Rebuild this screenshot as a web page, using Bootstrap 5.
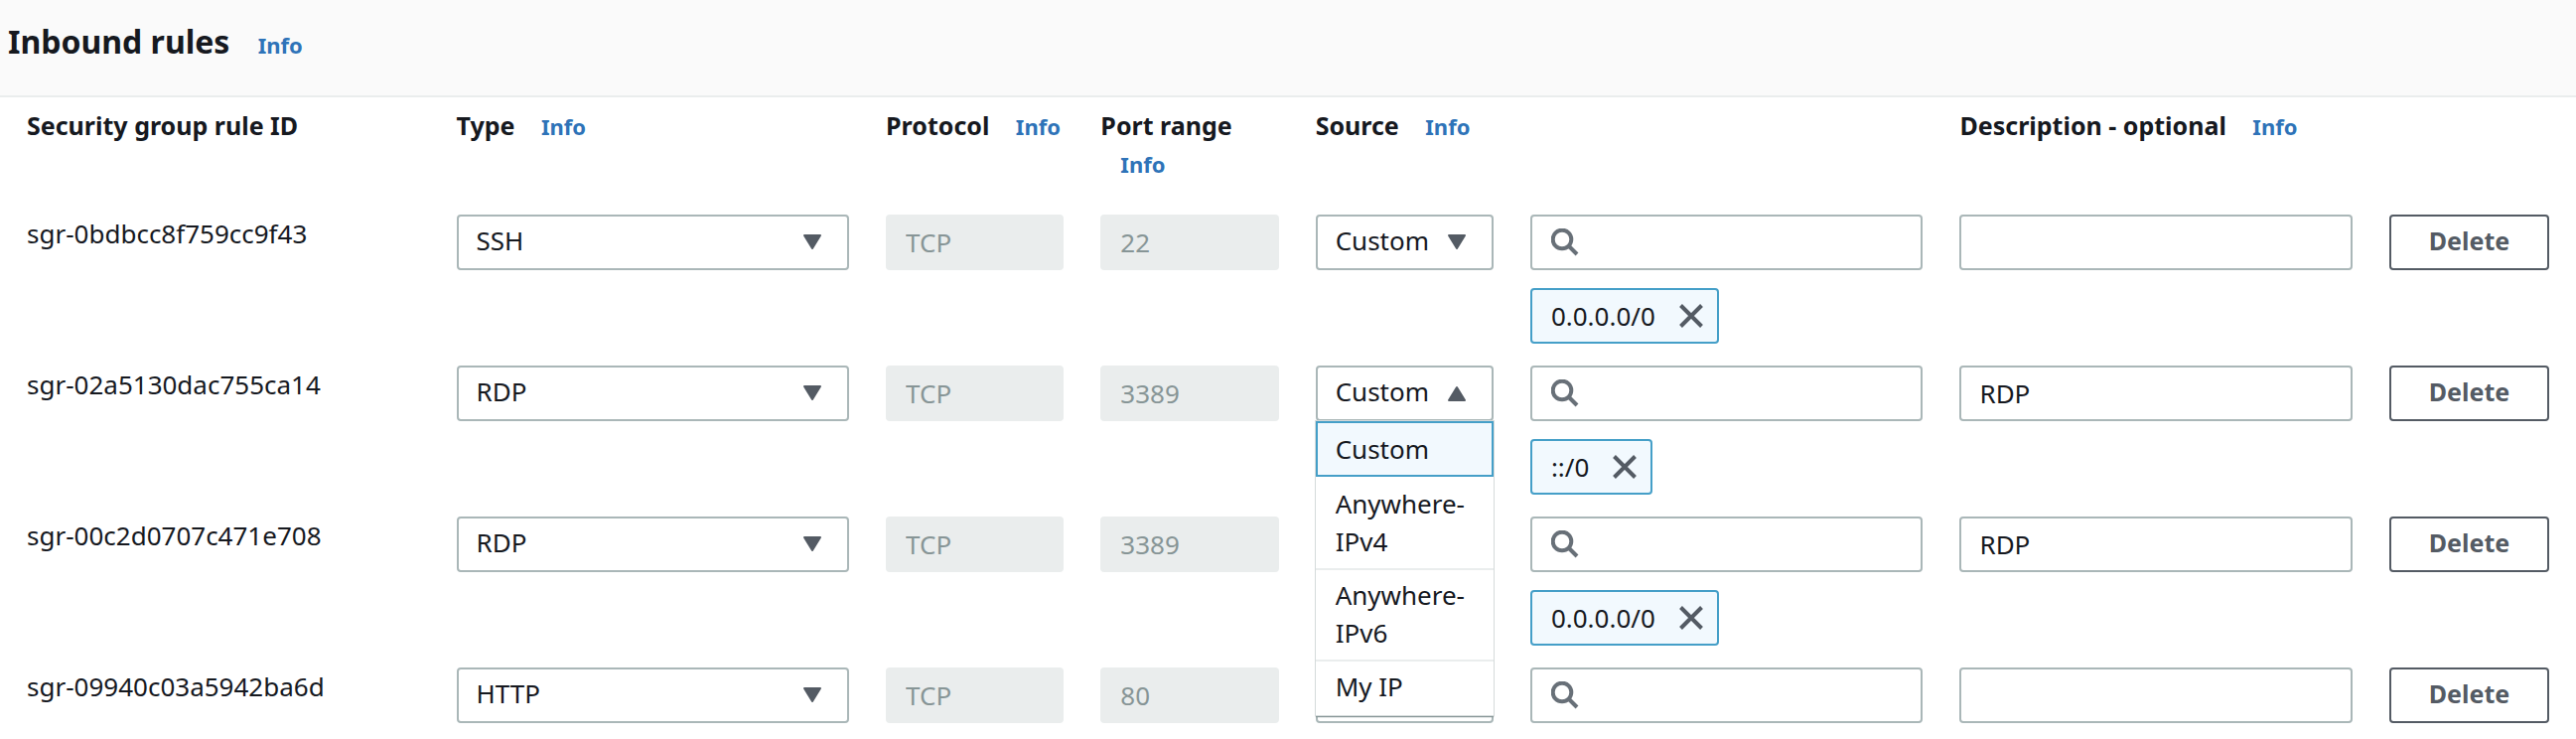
<!DOCTYPE html>
<html lang="en">
<head>
<meta charset="utf-8">
<meta name="viewport" content="width=device-width, initial-scale=1">
<title>Inbound rules</title>
<link href="https://cdn.jsdelivr.net/npm/bootstrap@5.3.0/dist/css/bootstrap.min.css" rel="stylesheet">
<style>
  body { font-family: "Noto Sans", "Open Sans", sans-serif; font-size: 26px; line-height: 38px; color: #16191f; background: #fff; }
  .panel-head { background: #fafafa; border-bottom: 2px solid #eaeded; padding: 18px 8px 30px; }
  .panel-head h1 { font-size: 32px; line-height: 48px; font-weight: 700; }
  .info-link { font-size: 22px; line-height: 1; font-weight: 700; color: #2e73b8; text-decoration: none; margin-left: 20px; }

  .rules { padding: 9px 27px 16px; }
  .rules thead tr { margin-bottom: 33px; }
  .rules tbody { display: grid; row-gap: 22px; }
  .rule-line { display: grid; grid-template-columns: repeat(11, minmax(0, 1fr)) 161px; column-gap: 37px; align-items: start; }
  .rule-line > * { padding: 0; }
  .rule-line th { font-size: 25px; font-weight: 700; margin-right: -10px; }
  .span-two { grid-column: span 2; }

  .field { height: 56px; font-size: 26px; line-height: 38px; border: 2px solid #aab7b8; border-radius: 4px; padding: 0 18px; color: #16191f; }
  .form-control.field:disabled { background: #eaeded; border-color: #eaeded; color: #879596; }
  .form-select.field { padding: 0 44px 4px 18px; background: #fff url("data:image/svg+xml,%3Csvg xmlns='http://www.w3.org/2000/svg' viewBox='0 0 20 16'%3E%3Cpath d='M2 1h16l-8 13z' fill='%23545b64' stroke='%23545b64' stroke-width='2' stroke-linejoin='round'/%3E%3C/svg%3E") no-repeat right 25px center / 20px 16px; }
  .form-select.field.opened { background-image: url("data:image/svg+xml,%3Csvg xmlns='http://www.w3.org/2000/svg' viewBox='0 0 20 16'%3E%3Cpath d='M2 15h16l-8-13z' fill='%23545b64' stroke='%23545b64' stroke-width='2' stroke-linejoin='round'/%3E%3C/svg%3E"); }
  .form-control.search { padding-left: 60px; background: #fff url("data:image/svg+xml,%3Csvg xmlns='http://www.w3.org/2000/svg' viewBox='0 0 28 28' fill='none' stroke='%23687078' stroke-width='4'%3E%3Ccircle cx='11' cy='11' r='9.3'/%3E%3Cpath d='M17.5 17.5l8.5 8.5'/%3E%3C/svg%3E") no-repeat 19px center / 28px 28px; }

  .cidr { height: 56px; margin-top: 18px; padding: 0 14px 0 19px; gap: 24px; background: #f2f9fe; border: 2px solid #459fc8; border-radius: 4px; }
  .cidr button { color: #545b64; line-height: 0; }
  .btn-delete { height: 56px; padding: 0 0 4px; font-size: 25px; line-height: 38px; font-weight: 700; color: #545b64; background: #fff; border: 2px solid #545b64; border-radius: 4px; }

  .source-menu { top: 56px; z-index: 5; background: #fff; padding-bottom: 2px; box-shadow: 0 0 0 1px #d5dbdb, 0 2px 1px 0 #879596; }
  .source-menu li { padding: 6px 20px 8px; border-bottom: 2px solid #eaeded; }
  .source-menu li:last-child { border-bottom: 0; }
  .source-menu li.current { padding: 7px 18px; margin-bottom: 2px; background: #f2f9fe; border: 2px solid #459fc8; }
</style>
</head>
<body>
<header class="panel-head d-flex">
  <h1 class="m-0">Inbound rules <a class="info-link" href="#">Info</a></h1>
</header>

<main class="rules">
  <table class="d-block w-100">
    <thead class="d-block">
      <tr class="rule-line">
        <th class="span-two" scope="col">Security group rule ID</th>
        <th class="span-two" scope="col">Type <a class="info-link" href="#">Info</a></th>
        <th scope="col">Protocol <a class="info-link" href="#">Info</a></th>
        <th scope="col">Port range <a class="info-link" href="#">Info</a></th>
        <th class="span-two" scope="col">Source <a class="info-link" href="#">Info</a></th>
        <td></td>
        <th class="span-two" scope="col">Description - optional <a class="info-link" href="#">Info</a></th>
        <td></td>
      </tr>
    </thead>
    <tbody>
      <tr class="rule-line">
        <td class="span-two">sgr-0bdbcc8f759cc9f43</td>
        <td class="span-two"><select class="form-select field" aria-label="Type"><option>SSH</option></select></td>
        <td><input class="form-control field" aria-label="Protocol" value="TCP" disabled></td>
        <td><input class="form-control field" aria-label="Port range" value="22" disabled></td>
        <td><select class="form-select field" aria-label="Source"><option>Custom</option></select></td>
        <td class="span-two">
          <input class="form-control field search" type="text" aria-label="Search source">
          <div class="cidr d-inline-flex align-items-center">0.0.0.0/0
            <button class="btn p-0 border-0" type="button" aria-label="Remove 0.0.0.0/0"><svg width="24" height="24" viewBox="0 0 24 24" stroke="currentColor" stroke-width="4"><path d="M1.500 1.500l21 21M22.500 1.500l-21 21"/></svg></button>
          </div>
        </td>
        <td class="span-two"><input class="form-control field" type="text" aria-label="Description"></td>
        <td><button class="btn btn-delete w-100" type="button">Delete</button></td>
      </tr>
      <tr class="rule-line">
        <td class="span-two">sgr-02a5130dac755ca14</td>
        <td class="span-two"><select class="form-select field" aria-label="Type"><option>RDP</option></select></td>
        <td><input class="form-control field" aria-label="Protocol" value="TCP" disabled></td>
        <td><input class="form-control field" aria-label="Port range" value="3389" disabled></td>
        <td class="position-relative">
          <select class="form-select field opened" aria-label="Source"><option>Custom</option></select>
          <ul class="source-menu list-unstyled position-absolute start-0 w-100 m-0" role="listbox" aria-label="Source options">
            <li class="current" role="option" aria-selected="true">Custom</li>
            <li role="option">Anywhere-IPv4</li>
            <li role="option">Anywhere-IPv6</li>
            <li role="option">My IP</li>
          </ul>
        </td>
        <td class="span-two">
          <input class="form-control field search" type="text" aria-label="Search source">
          <div class="cidr d-inline-flex align-items-center">::/0
            <button class="btn p-0 border-0" type="button" aria-label="Remove ::/0"><svg width="24" height="24" viewBox="0 0 24 24" stroke="currentColor" stroke-width="4"><path d="M1.500 1.500l21 21M22.500 1.500l-21 21"/></svg></button>
          </div>
        </td>
        <td class="span-two"><input class="form-control field" type="text" aria-label="Description" value="RDP"></td>
        <td><button class="btn btn-delete w-100" type="button">Delete</button></td>
      </tr>
      <tr class="rule-line">
        <td class="span-two">sgr-00c2d0707c471e708</td>
        <td class="span-two"><select class="form-select field" aria-label="Type"><option>RDP</option></select></td>
        <td><input class="form-control field" aria-label="Protocol" value="TCP" disabled></td>
        <td><input class="form-control field" aria-label="Port range" value="3389" disabled></td>
        <td><select class="form-select field" aria-label="Source"><option>Custom</option></select></td>
        <td class="span-two">
          <input class="form-control field search" type="text" aria-label="Search source">
          <div class="cidr d-inline-flex align-items-center">0.0.0.0/0
            <button class="btn p-0 border-0" type="button" aria-label="Remove 0.0.0.0/0"><svg width="24" height="24" viewBox="0 0 24 24" stroke="currentColor" stroke-width="4"><path d="M1.500 1.500l21 21M22.500 1.500l-21 21"/></svg></button>
          </div>
        </td>
        <td class="span-two"><input class="form-control field" type="text" aria-label="Description" value="RDP"></td>
        <td><button class="btn btn-delete w-100" type="button">Delete</button></td>
      </tr>
      <tr class="rule-line">
        <td class="span-two">sgr-09940c03a5942ba6d</td>
        <td class="span-two"><select class="form-select field" aria-label="Type"><option>HTTP</option></select></td>
        <td><input class="form-control field" aria-label="Protocol" value="TCP" disabled></td>
        <td><input class="form-control field" aria-label="Port range" value="80" disabled></td>
        <td><select class="form-select field" aria-label="Source"><option>Custom</option></select></td>
        <td class="span-two"><input class="form-control field search" type="text" aria-label="Search source"></td>
        <td class="span-two"><input class="form-control field" type="text" aria-label="Description"></td>
        <td><button class="btn btn-delete w-100" type="button">Delete</button></td>
      </tr>
    </tbody>
  </table>
</main>
<script src="https://cdn.jsdelivr.net/npm/bootstrap@5.3.0/dist/js/bootstrap.bundle.min.js"></script>
</body>
</html>
